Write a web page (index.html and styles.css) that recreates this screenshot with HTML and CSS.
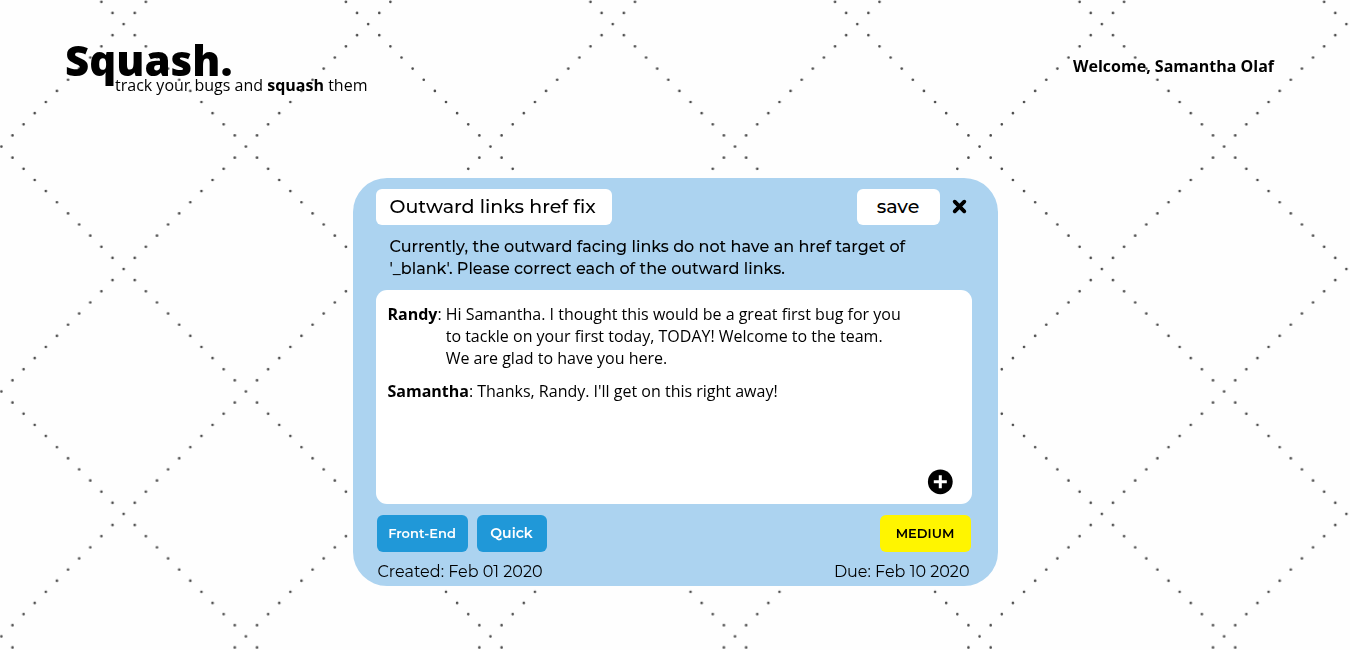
FILE: index.html
```html
<!DOCTYPE html>
<html lang="en">
<head>
<meta charset="utf-8">
<meta name="viewport" content="width=device-width, initial-scale=1">
<title>Squash.</title>
<link rel="stylesheet" href="styles.css">
</head>
<body>
<svg class="backdrop" aria-hidden="true">
  <defs>
    <pattern id="dots" width="220" height="220" patternUnits="userSpaceOnUse" patternTransform="translate(-4.2 -103.9) scale(1.1116 1.1132)">
      <path d="M5 5L216 216M15 215L216 14" fill="none" stroke="#4c4c4c" stroke-width="2.4" stroke-linecap="round" stroke-dasharray="0 14.1421"/>
    </pattern>
  </defs>
  <rect width="100%" height="100%" fill="url(#dots)"/>
</svg>
<header class="site-header">
  <div class="brand">
    <h1 class="logo">Squash.</h1>
    <p class="tagline">track your bugs and <strong>squash</strong> them</p>
  </div>
  <p class="welcome">Welcome, Samantha Olaf</p>
</header>
<main class="main">
  <form class="card">
    <div class="card-head">
      <input class="title" type="text" aria-label="Bug title" value="Outward links href fix">
      <button class="save" type="button">save</button>
      <button class="icon-button" type="button" aria-label="Close">
        <svg width="16" height="16" viewBox="0 0 16 16"><path d="M2.7 2.7L12.3 12.3M12.3 2.7L2.7 12.3" stroke="#000" stroke-width="3.2"/><path d="M2.7 2.7L12.3 12.3M12.3 2.7L2.7 12.3" stroke="#000" stroke-width="3.8" stroke-linecap="round"/></svg>
      </button>
    </div>
    <p class="description">Currently, the outward facing links do not have an href target of '_blank'. Please correct each of the outward links.</p>
    <section class="comments" aria-label="Comments">
      <div class="comment"><p class="author"><strong>Randy</strong>:</p><p class="message">Hi Samantha. I thought this would be a great first bug for you to tackle on your first today, TODAY! Welcome to the team. We are glad to have you here.</p></div>
      <div class="comment"><p class="author"><strong>Samantha</strong>:</p><p class="message">Thanks, Randy. I'll get on this right away!</p></div>
      <button class="icon-button add" type="button" aria-label="Add comment">
        <svg width="26" height="26" viewBox="0 0 26 26"><circle cx="13.3" cy="12.8" r="12.4"/><path d="M13.3 6.3V19.3M6.8 12.8H19.8" stroke="#fff" stroke-width="3"/></svg>
      </button>
    </section>
    <div class="tags">
      <button class="tag" type="button">Front-End</button>
      <button class="tag tag-short" type="button">Quick</button>
      <button class="tag priority" type="button">MEDIUM</button>
    </div>
    <footer class="dates"><span>Created: Feb 01 2020</span><span>Due: Feb 10 2020</span></footer>
  </form>
</main>
</body>
</html>
```
FILE: styles.css
```css
* {
  box-sizing: border-box;
}

body {
  margin: 0;
  min-height: 100vh;
  background: #fefefe;
  color: #000;
  font: 16px/22px "Open Sans", sans-serif;
}

h1,
p {
  margin: 0;
}

button,
input {
  border: 0;
  padding: 0;
  margin: 0;
  color: inherit;
  font: inherit;
}

button {
  cursor: pointer;
}

.backdrop {
  position: fixed;
  inset: 0;
  z-index: -1;
  width: 100%;
  height: 100%;
}

.site-header {
  display: flex;
  justify-content: space-between;
  padding: 38px 76px 0 65px;
}

.logo {
  font-size: 42px;
  line-height: 44px;
  font-weight: 800;
}

.tagline {
  margin: -8px 0 0 50px;
}

.welcome {
  padding-top: 17px;
  font-weight: 700;
}

.main {
  padding: 82px 16px 24px;
}

.card {
  max-width: 645px;
  margin: 0 auto;
  padding: 11px 26px 3px 23px;
  border-radius: 34px;
  background: #acd3f0;
  font-family: Montserrat, Inter, sans-serif;
}

.card-head {
  display: flex;
  align-items: center;
  gap: 12px;
}

.title,
.save {
  height: 36px;
  border-radius: 6px;
  background: #fff;
  font-size: 19px;
  font-weight: 500;
}

.title {
  width: 236px;
  padding: 0 14px 2px;
}

.save {
  width: 83px;
  margin-left: auto;
}

.icon-button {
  display: flex;
  background: none;
}

.card-head .icon-button {
  margin-right: 4px;
}

.description {
  max-width: 560px;
  padding: 11px 0 10px 14px;
  font-weight: 500;
}

.comments {
  display: flex;
  flex-direction: column;
  gap: 11px;
  min-height: 214px;
  padding: 13px 19px 9px 12px;
  border-radius: 11px;
  background: #fff;
  font-family: "Open Sans", sans-serif;
}

.comment {
  display: flex;
  gap: 4px;
}

.message {
  max-width: 460px;
}

.add {
  margin: auto 0 0 auto;
}

.tags {
  display: flex;
  gap: 9px;
  margin-top: 11px;
  padding: 0 1px;
}

.tag {
  width: 91px;
  height: 37px;
  padding-bottom: 2px;
  border-radius: 6px;
  background: #2098d8;
  color: #fff;
  font-size: 13px;
  font-weight: 600;
}

.tag-short {
  width: 70px;
  font-size: 14px;
}

.priority {
  margin-left: auto;
  background: #fff500;
  color: #000;
}

.dates {
  display: flex;
  justify-content: space-between;
  padding: 9px 2px 0;
}
```
